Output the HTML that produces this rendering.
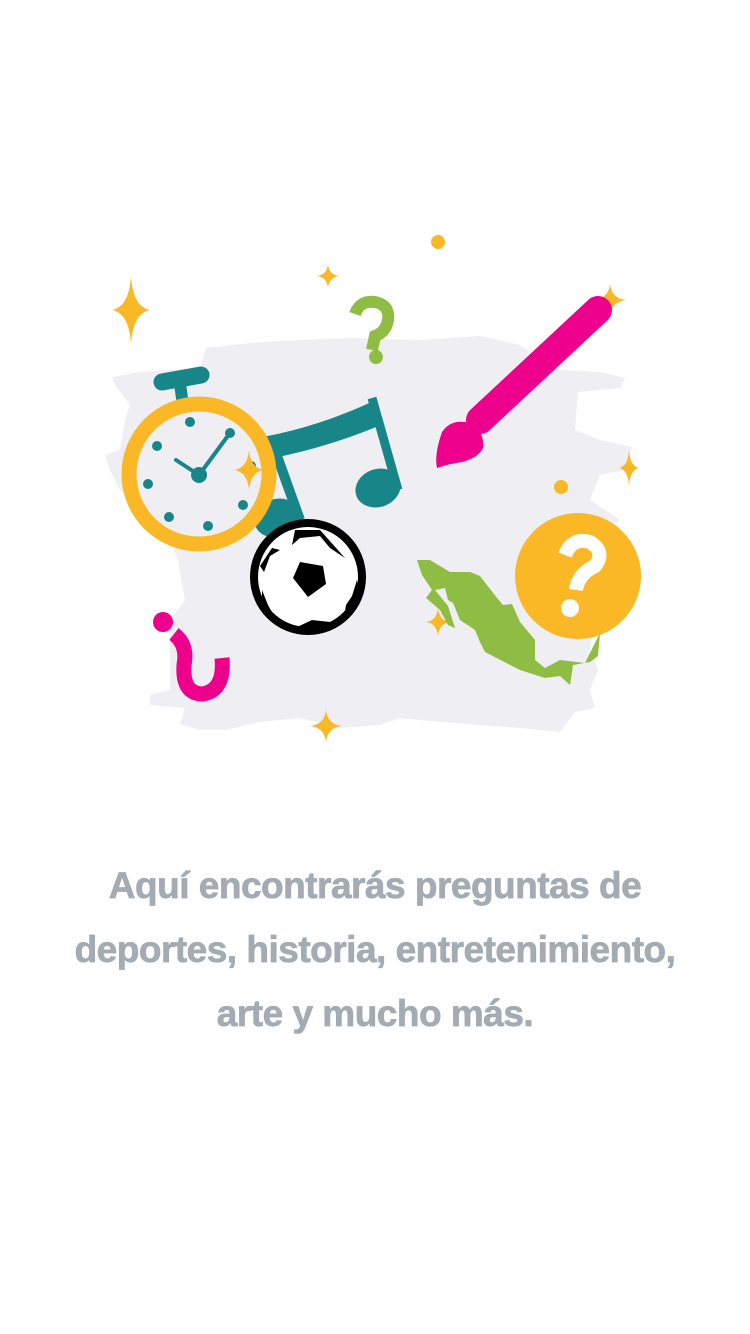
<!DOCTYPE html>
<html><head><meta charset="utf-8"><style>
html,body{margin:0;padding:0;background:#fff;width:750px;height:1334px;overflow:hidden}
svg{position:absolute;left:0;top:0}
.t{position:absolute;left:0;width:750px;top:854px;text-align:center;font-family:"Liberation Sans",sans-serif;font-weight:bold;font-size:37px;line-height:64px;color:#a3abb3;letter-spacing:-0.5px;-webkit-text-stroke:0.7px #a3abb3}
</style></head><body>
<svg width="750" height="1334" viewBox="0 0 750 1334">
<defs>
<symbol id="sp" viewBox="-10 -10 20 20" preserveAspectRatio="none"><path d="M0 -10 Q1 -1 10 0 Q1 1 0 10 Q-1 1 -10 0 Q-1 -1 0 -10Z" fill="#fbb826"/></symbol>
</defs>
<path fill="#efeff3" d="M206 348 L260 342 L300 340 L350 338 L420 340 L480 336 L520 345 L560 370 L600 372 L625 378 L620 388 L578 392 L575 430 L600 440 L632 447 L625 470 L600 475 L590 500 L620 520 L600 540 L598 600 L590 650 L598 670 L590 690 L595 708 L575 712 L560 732 L520 728 L440 722 L400 718 L380 725 L340 728 L300 718 L260 722 L225 730 L200 730 L180 724 L185 708 L150 705 L150 695 L170 690 L170 620 L185 600 L178 560 L170 540 L150 530 L140 510 L120 490 L110 470 L105 455 L120 450 L125 420 L130 405 L115 385 L112 377 L140 372 L200 368 Z"/>
<use href="#sp" x="112" y="276" width="38" height="68"/>
<use href="#sp" x="317" y="264" width="22" height="24"/>
<use href="#sp" x="594" y="284" width="32" height="32"/>
<use href="#sp" x="619" y="450" width="20" height="36"/>
<use href="#sp" x="310" y="710" width="32" height="32"/>
<use href="#sp" x="426" y="608" width="24" height="28"/>
<circle cx="438" cy="242" r="7" fill="#fbb826"/>
<circle cx="561" cy="487" r="7" fill="#fbb826"/>
<path d="M162 382 L201 375" stroke="#188689" stroke-width="17" stroke-linecap="round"/>
<path d="M180 384 L183 405" stroke="#188689" stroke-width="12"/>
<path d="M268 438 Q320 428 372 404 L378 424 Q330 444 278 455Z" fill="#188689" stroke="#188689" stroke-width="4" stroke-linejoin="round"/>
<path d="M372 398 L398 490" stroke="#188689" stroke-width="9"/>
<ellipse cx="378" cy="488" rx="23" ry="19" transform="rotate(-20 378 488)" fill="#188689"/>
<path d="M272 442 L300 520" stroke="#188689" stroke-width="10"/>
<ellipse cx="277" cy="518" rx="23" ry="19" transform="rotate(-20 277 518)" fill="#188689"/>
<circle cx="199" cy="474" r="70" fill="#eeeef3" stroke="#fbb826" stroke-width="15"/>
<g fill="#188689">
<circle cx="190" cy="422" r="5"/><circle cx="230" cy="433" r="5"/><circle cx="157" cy="446" r="5"/>
<circle cx="148" cy="484" r="5"/><circle cx="169" cy="517" r="5"/><circle cx="208" cy="526" r="5"/>
<circle cx="243" cy="505" r="5"/><circle cx="251" cy="466" r="5"/><circle cx="199" cy="475" r="8"/></g>
<path d="M199 475 L230 433 M199 475 L176 460" stroke="#188689" stroke-width="4" stroke-linecap="round"/>
<use href="#sp" x="234" y="450" width="30" height="40"/>
<circle cx="308" cy="577" r="58" fill="#000"/>
<circle cx="308" cy="577" r="50" fill="#fff"/>
<path d="M292 545 L300 538 L320 536 L330 548 L345 558 L320 530 L295 530Z M357 580 L352 596 L346 605 L344 618 L360 598Z M330 622 L312 620 L295 628 L320 632Z M276 620 L268 605 L262 590 L262 610Z M264 572 L270 556 L280 550 L272 548 L260 566Z" fill="#000"/>
<path d="M300 562 L323 566 L326 584 L308 597 L293 578Z" fill="#000"/>
<path d="M355 314 Q360 300 375 302 Q390 305 388 320 Q386 332 375 336 L372 350" fill="none" stroke="#8fbc43" stroke-width="12"/>
<circle cx="376" cy="357" r="7" fill="#8fbc43"/>
<path d="M598 310 L480 420" stroke="#ec008c" stroke-width="28" stroke-linecap="round"/>
<path d="M437 468 Q434 455 442 432 Q450 420 465 422 Q485 428 483 448 Q478 458 462 462 Q448 464 437 468Z" fill="#ec008c"/>
<path fill="#8fbc43" d="M417 560 L430 560 L450 572 L470 572 L480 576 L497 598 L503 605 L512 604 L520 622 L535 640 L535 660 L545 668 L560 660 L585 663 L600 633 L598 656 L590 662 L573 665 L570 685 L560 676 L545 678 L520 670 L485 652 L480 642 L475 630 L460 620 L453 603 L448 600 L445 588 L435 590 L448 606 L455 628 L448 625 L440 610 L426 598 L432 590 L422 575Z"/>
<circle cx="578" cy="576" r="63" fill="#fbb826"/>
<path d="M565 555 Q572 537 590 542 Q606 552 595 566 Q578 574 576 590" fill="none" stroke="#fff" stroke-width="14"/>
<circle cx="570" cy="608" r="9" fill="#fff"/>
<circle cx="163" cy="622" r="10" fill="#ec008c"/>
<path d="M174 634 Q188 645 184 665 Q182 694 203 694 Q225 690 222 658" fill="none" stroke="#ec008c" stroke-width="15"/>
</svg>
<div class="t">Aquí encontrarás preguntas de<br>deportes, historia, entretenimiento,<br>arte y mucho más.</div>
</body></html>
